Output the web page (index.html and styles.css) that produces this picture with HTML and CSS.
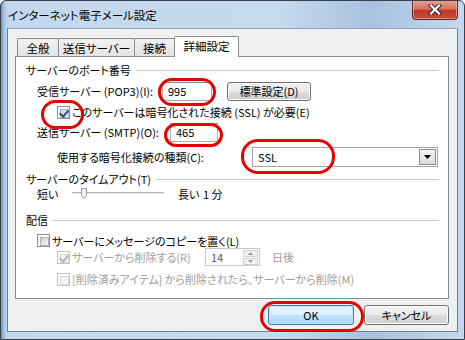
FILE: index.html
```html
<!DOCTYPE html>
<html lang="ja">
<head>
    <meta charset="UTF-8">
    <title>インターネット電子メール設定</title>
    <link rel="stylesheet" href="styles.css">
</head>
<body>
<div class="window">
    <div class="titlebar">
        <span class="title">インターネット電子メール設定</span>
        <div class="close-btn">
            <svg width="14" height="11" viewBox="0 0 14 11">
                <path d="M3 1.5 L11 9.5 M11 1.5 L3 9.5" stroke="#4a1f1a" stroke-width="4.2" stroke-linecap="square"/>
                <path d="M3 1.5 L11 9.5 M11 1.5 L3 9.5" stroke="#fff" stroke-width="2.2" stroke-linecap="square"/>
            </svg>
        </div>
    </div>

    <div class="client">
        <div class="tabs">
            <div class="tab">全般</div>
            <div class="tab">送信サーバー</div>
            <div class="tab">接続</div>
            <div class="tab active">詳細設定</div>
        </div>

        <div class="panel">
            <div class="group-title gt-port"><span>サーバーのポート番号</span></div>

            <div class="row row-pop">
                <span class="label lbl-pop">受信サーバー (POP3)(I):</span>
                <div class="textbox tb-pop">995</div>
                <button class="btn btn-std">標準設定(D)</button>
            </div>

            <div class="row row-ssl deep">
                <span class="cb checked"></span>
                <span>このサーバーは暗号化された接続 (SSL) が必要(E)</span>
            </div>

            <div class="row row-smtp">
                <span class="label lbl-smtp">送信サーバー (SMTP)(O):</span>
                <div class="textbox tb-smtp">465</div>
            </div>

            <div class="row row-enc deep">
                <span class="label lbl-enc">使用する暗号化接続の種類(C):</span>
                <div class="select">
                    <span class="select-value">SSL</span>
                    <span class="select-arrow">
                        <svg width="7" height="4" viewBox="0 0 7 4"><path d="M0 0 H7 L3.5 4 Z" fill="#000"/></svg>
                    </span>
                </div>
            </div>

            <div class="group-title gt-timeout"><span>サーバーのタイムアウト(T)</span></div>

            <div class="row row-timeout">
                <span class="lbl-short">短い</span>
                <svg class="slider" width="92" height="14" viewBox="0 0 92 14">
                    <rect x="0" y="5" width="92" height="1" fill="#b5b5b5"/>
                    <rect x="0" y="6" width="92" height="1" fill="#e4e4e4"/>
                    <path d="M9.5 1.5 H14.5 V8.5 L12 11.5 L9.5 8.5 Z" fill="#f3f3f3" stroke="#9a9a9a"/>
                </svg>
                <span class="lbl-long">長い</span>
                <span>1 分</span>
            </div>

            <div class="group-title gt-deliver"><span>配信</span></div>

            <div class="row row-copy">
                <span class="cb"></span>
                <span>サーバーにメッセージのコピーを置く(L)</span>
            </div>

            <div class="row row-del deep disabled">
                <span class="cb checked"></span>
                <span class="lbl-del">サーバーから削除する(R)</span>
                <div class="textbox tb-days">
                    <span>14</span>
                    <span class="spin">
                        <span class="spin-btn"><svg width="5" height="3" viewBox="0 0 5 3"><path d="M0 3 H5 L2.5 0 Z" fill="#9a9a9a"/></svg></span>
                        <span class="spin-btn"><svg width="5" height="3" viewBox="0 0 5 3"><path d="M0 0 H5 L2.5 3 Z" fill="#9a9a9a"/></svg></span>
                    </span>
                </div>
                <span class="lbl-days">日後</span>
            </div>

            <div class="row row-trash deep disabled">
                <span class="cb"></span>
                <span>[削除済みアイテム] から削除されたら、サーバーから削除(M)</span>
            </div>
        </div>

        <div class="footer">
            <button class="btn btn-ok">OK</button>
            <button class="btn btn-cancel">キャンセル</button>
        </div>
    </div>

    <!-- red marks drawn over the dialog -->
    <div class="mark mark-pop"></div>
    <div class="mark mark-ssl"></div>
    <div class="mark mark-smtp"></div>
    <div class="mark mark-enc"></div>
    <div class="mark mark-ok"></div>
</div>
</body>
</html>
```

FILE: styles.css
```css
* {
    box-sizing: border-box;
}
body {
    margin: 0;
    font-family: "Noto Sans CJK JP", sans-serif;
    font-size: 11px;
    line-height: 14px;
    font-feature-settings: "palt";
    color: #000;
    background: #fff;
}
.window {
    position: relative;
    width: 465px;
    height: 340px;
    overflow: hidden;
    background: linear-gradient(90deg, #6d8fbb 0, #a9c4e3 3px, #c3d8ee 7px, #c6daf0 60%, #a8c2de 80%, #c4d8ee 100%);
    border: 1px solid #38404c;
    border-radius: 6px 6px 0 0;
}
.titlebar {
    display: flex;
    align-items: flex-start;
    height: 27px;
    padding-left: 7px;
}
.title {
    margin-top: 5px;
    line-height: 18px;
    font-size: 11.5px;
    color: #000;
}
.close-btn {
    margin-left: auto;
    margin-right: 6px;
    width: 46px;
    height: 20px;
    margin-top: -1px;
    display: flex;
    align-items: center;
    justify-content: center;
    border: 1px solid #5b2a24;
    border-top: none;
    border-radius: 0 0 4px 4px;
    background: linear-gradient(#e8a493 0, #d47565 45%, #c0392b 55%, #c84a35 100%);
    box-shadow: inset 0 0 0 1px rgba(255, 210, 200, 0.5);
}

/* dialog body */
.client {
    margin: 0 6px;
    height: 304px;
    background: #f0f0f0;
    border: 1px solid #6f8095;
    border-top: 1px solid #8fa5bf;
}
.tabs {
    display: flex;
    align-items: flex-end;
    height: 20px;
    margin: 7px 0 0 9px;
}
.tab {
    height: 18px;
    display: flex;
    align-items: center;
    justify-content: center;
    font-size: 11.5px;
    border: 1px solid #898c95;
    border-bottom: none;
    margin-right: -1px;
    background: linear-gradient(#f2f2f2, #e3e3e3);
    border-radius: 2px 2px 0 0;
}
.tab:nth-child(1) { width: 42px; }
.tab:nth-child(2) { width: 77px; }
.tab:nth-child(3) { width: 41px; }
.tab.active {
    position: relative;
    z-index: 1;
    width: 65px;
    height: 21px;
    margin-bottom: -1px;
    padding-bottom: 2px;
    background: #fff;
}
.panel {
    margin: 0 8px 0 7px;
    height: 243px;
    background: #fff;
    border: 1px solid #898c95;
    padding: 4px 9px 0 10px;
}

/* group headings with rule */
.group-title {
    display: flex;
    align-items: center;
    height: 18px;
}
.group-title::after {
    content: "";
    flex: 1;
    height: 1px;
    margin-left: 5px;
    background: #c5ced6;
}
.gt-timeout {
    height: 16px;
}
.gt-deliver {
    height: 16px;
    margin-top: 11px;
}

/* rows */
.row {
    display: flex;
    align-items: center;
    padding-left: 11px;
    white-space: nowrap;
}
.row.deep {
    padding-left: 31px;
}
.row-pop { height: 24px; }
.row-ssl { height: 18px; }
.row-smtp { height: 22px; }
.row-enc { height: 28px; }
.row-timeout { height: 14px; }
.row-copy { height: 15px; margin-top: 5px; }
.row-del { height: 18px; }
.row-trash { height: 16px; margin-top: 5px; }

.lbl-pop { width: 125px; }
.lbl-smtp { width: 133px; }
.lbl-enc { width: 195px; }
.lbl-short { width: 35px; }
.lbl-long { margin-left: 14px; width: 25px; }
.lbl-del { width: 133px; }
.lbl-days { margin-left: 12px; }

.disabled {
    color: #9d9d9d;
}

/* controls */
.textbox {
    height: 19px;
    display: flex;
    align-items: center;
    padding-left: 5px;
    background: #fff;
    border: 1px solid #abadb3;
    border-top-color: #8d9099;
}
.tb-pop { width: 50px; }
.tb-smtp { width: 48px; }
.tb-days {
    width: 55px;
    height: 18px;
    padding-right: 1px;
    color: #555;
    border-color: #c8c8c8;
}
.spin {
    margin-left: auto;
    display: flex;
    flex-direction: column;
    gap: 1px;
}
.spin-btn {
    width: 15px;
    height: 7px;
    display: flex;
    align-items: center;
    justify-content: center;
    border: 1px solid #d2d2d2;
    background: #f1f1f1;
}

.btn {
    height: 19px;
    padding: 0;
    font-family: inherit;
    font-size: 11px;
    line-height: 14px;
    font-feature-settings: "palt";
    color: #000;
    border: 1px solid #707070;
    border-radius: 3px;
    background: linear-gradient(#f2f2f2 0, #ebebeb 50%, #dddddd 51%, #cfcfcf 100%);
    box-shadow: inset 0 0 0 1px #fcfcfc;
}
.btn-std {
    width: 84px;
    margin-left: 15px;
}
.footer {
    display: flex;
    justify-content: flex-end;
    gap: 10px;
    margin: 6px 8px 0 0;
}
.footer .btn {
    height: 20px;
}
.btn-ok {
    width: 86px;
    border-color: #3c7fb1;
    background: linear-gradient(#eaf6fd 0, #d9f0fc 50%, #bee6fd 51%, #a7d9f5 100%);
    box-shadow: inset 0 0 0 1px #bfe4f7;
}
.btn-cancel {
    width: 85px;
}

.select {
    width: 186px;
    height: 20px;
    display: flex;
    align-items: center;
    border: 1px solid #a5a5a5;
    background: #fff;
    padding: 0 1px 0 5px;
}
.select-arrow {
    margin-left: auto;
    width: 17px;
    height: 16px;
    display: flex;
    align-items: center;
    justify-content: center;
    border: 1px solid #8c8c8c;
    background: linear-gradient(#f4f4f4, #dcdcdc);
}

.cb {
    width: 13px;
    height: 13px;
    margin-right: 2px;
    flex-shrink: 0;
    border: 1px solid #8e8f8f;
    background: #fff;
    padding: 2px;
    position: relative;
}
.cb::before {
    content: "";
    display: block;
    width: 100%;
    height: 100%;
    border: 1px solid #b0b5bb;
    background: linear-gradient(135deg, #cdd1d8, #f7f7f7);
}
.cb.checked::after {
    content: "";
    position: absolute;
    left: 3px;
    top: 1px;
    width: 4px;
    height: 7px;
    border: solid #354f8c;
    border-width: 0 2px 2px 0;
    transform: rotate(40deg);
}
.disabled .cb {
    border-color: #c4c4c4;
}
.disabled .cb::before {
    border-color: #dadada;
    background: #f3f3f3;
}
.disabled .cb.checked::after {
    border-color: #b4b4b4;
}

.slider {
    display: block;
}

/* red annotation ovals */
.mark {
    position: absolute;
    border: 3px solid #e60000;
    border-radius: 14px;
}
.mark-pop { left: 157px; top: 77px; width: 58px; height: 28px; }
.mark-ssl { left: 40px; top: 99px; width: 43px; height: 29px; border-radius: 15px; }
.mark-smtp { left: 163px; top: 122px; width: 59px; height: 24px; }
.mark-enc { left: 240px; top: 138px; width: 94px; height: 35px; border-radius: 17px; }
.mark-ok { left: 259px; top: 300px; width: 104px; height: 31px; border-radius: 15px; }
```
